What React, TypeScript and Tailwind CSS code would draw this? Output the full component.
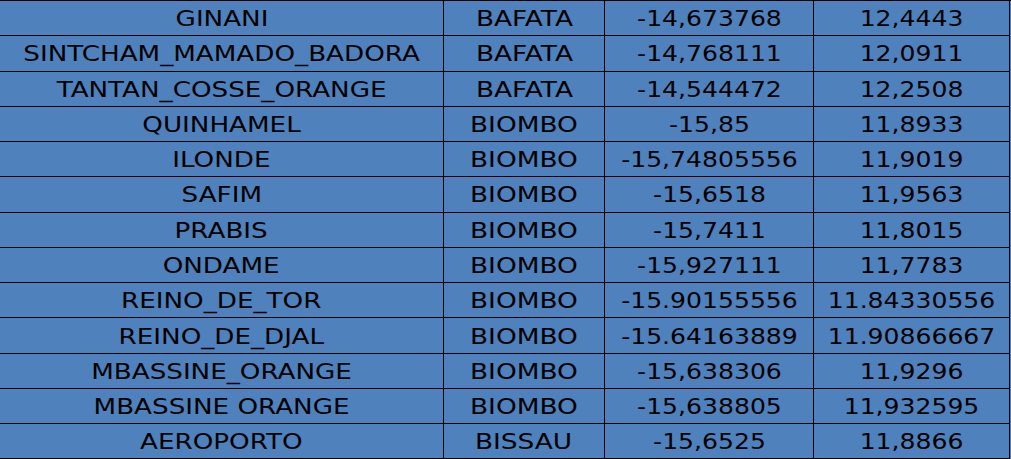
type Site = {
  name: string;
  region: string;
  lon: string;
  lat: string;
};

const sites: Site[] = [
  { name: "GINANI", region: "BAFATA", lon: "-14,673768", lat: "12,4443" },
  { name: "SINTCHAM_MAMADO_BADORA", region: "BAFATA", lon: "-14,768111", lat: "12,0911" },
  { name: "TANTAN_COSSE_ORANGE", region: "BAFATA", lon: "-14,544472", lat: "12,2508" },
  { name: "QUINHAMEL", region: "BIOMBO", lon: "-15,85", lat: "11,8933" },
  { name: "ILONDE", region: "BIOMBO", lon: "-15,74805556", lat: "11,9019" },
  { name: "SAFIM", region: "BIOMBO", lon: "-15,6518", lat: "11,9563" },
  { name: "PRABIS", region: "BIOMBO", lon: "-15,7411", lat: "11,8015" },
  { name: "ONDAME", region: "BIOMBO", lon: "-15,927111", lat: "11,7783" },
  { name: "REINO_DE_TOR", region: "BIOMBO", lon: "-15.90155556", lat: "11.84330556" },
  { name: "REINO_DE_DJAL", region: "BIOMBO", lon: "-15.64163889", lat: "11.90866667" },
  { name: "MBASSINE_ORANGE", region: "BIOMBO", lon: "-15,638306", lat: "11,9296" },
  { name: "MBASSINE ORANGE", region: "BIOMBO", lon: "-15,638805", lat: "11,932595" },
  { name: "AEROPORTO", region: "BISSAU", lon: "-15,6525", lat: "11,8866" },
];

const cell =
  "flex items-center justify-center border-r border-b border-black pt-[2px] whitespace-nowrap";

// DejaVu is narrower than the sheet's Verdana, so widen the glyphs a bit
function SiteRow({ site }: { site: Site }) {
  return (
    <div className="grid h-[35.27px] grid-cols-[444px_161px_209px_196px]">
      <div className={cell}>
        <span className="inline-block scale-x-[1.19]">{site.name}</span>
      </div>
      <div className={cell}>
        <span className="inline-block scale-x-[1.2]">{site.region}</span>
      </div>
      <div className={cell}>
        <span className="inline-block scale-x-[1.14]">{site.lon}</span>
      </div>
      <div className={cell}>
        <span className="inline-block scale-x-[1.14]">{site.lat}</span>
      </div>
    </div>
  );
}

export default function App() {
  return (
    <div
      className="h-[459px] w-[1011px] overflow-hidden border-t border-black bg-[#4f81bd] text-[22px] leading-none text-black"
      style={{ fontFamily: '"DejaVu Sans", Verdana, sans-serif' }}
    >
      {sites.map((site) => (
        <SiteRow key={site.name} site={site} />
      ))}
    </div>
  );
}
